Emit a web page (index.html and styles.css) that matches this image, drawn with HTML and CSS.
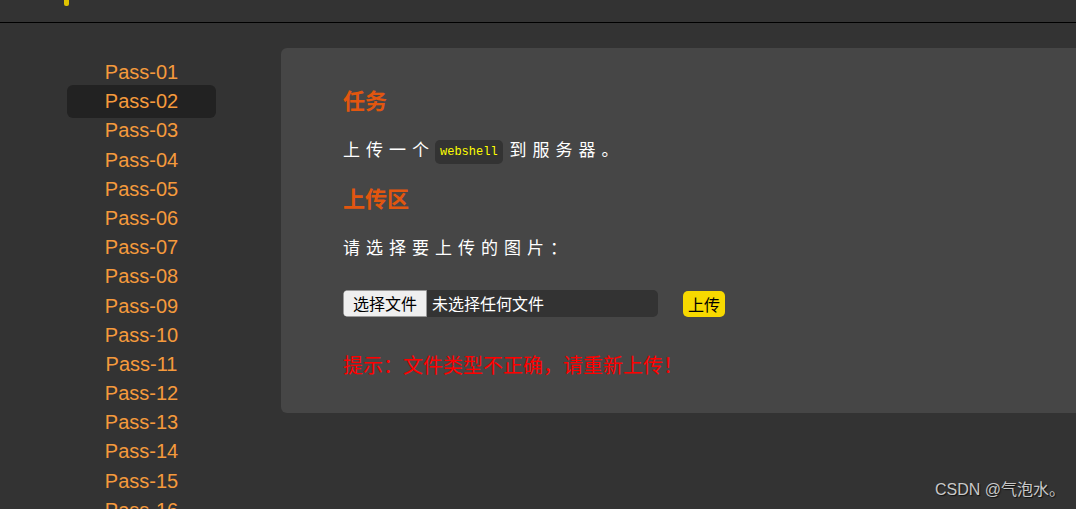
FILE: index.html
```html
<!DOCTYPE html>
<html lang="zh-CN">
<head>
  <meta charset="UTF-8" />
  <meta name="viewport" content="width=device-width, initial-scale=1.0" />
  <title>upload-labs</title>
  <link rel="stylesheet" href="styles.css">
</head>
<body>
  <header class="topbar">
    <span class="logo-tail"></span>
  </header>

  <div class="layout">
    <nav class="menu">
      <a href="#" class="menu-item">Pass-01</a>
      <a href="#" class="menu-item active">Pass-02</a>
      <a href="#" class="menu-item">Pass-03</a>
      <a href="#" class="menu-item">Pass-04</a>
      <a href="#" class="menu-item">Pass-05</a>
      <a href="#" class="menu-item">Pass-06</a>
      <a href="#" class="menu-item">Pass-07</a>
      <a href="#" class="menu-item">Pass-08</a>
      <a href="#" class="menu-item">Pass-09</a>
      <a href="#" class="menu-item">Pass-10</a>
      <a href="#" class="menu-item">Pass-11</a>
      <a href="#" class="menu-item">Pass-12</a>
      <a href="#" class="menu-item">Pass-13</a>
      <a href="#" class="menu-item">Pass-14</a>
      <a href="#" class="menu-item">Pass-15</a>
      <a href="#" class="menu-item">Pass-16</a>
    </nav>

    <main class="panel">
      <h2 class="title">任务</h2>
      <p class="text">上传一个<code class="code">webshell</code>到服务器。</p>

      <h2 class="title">上传区</h2>
      <p class="text">请选择要上传的图片：</p>

      <form class="upload-form">
        <div class="file-box">
          <span class="file-btn">选择文件</span>
          <span class="file-name">未选择任何文件</span>
        </div>
        <button type="submit" class="submit-btn">上传</button>
      </form>

      <p class="msg">提示：文件类型不正确，请重新上传！</p>
    </main>
  </div>

  <div class="watermark">CSDN @气泡水。</div>
</body>
</html>
```

FILE: styles.css
```css
body {
  margin: 0;
  height: 509px;
  overflow: hidden;
  background-color: #333;
  font-family: "Liberation Sans", Arial, "Noto Sans CJK SC", sans-serif;
  color: #fff;
}

.topbar {
  height: 22px;
  border-bottom: 1px solid #000;
  background-color: #333;
}

.logo-tail {
  display: block;
  margin-left: 64px;
  width: 5px;
  height: 6px;
  background-color: #e0c400;
  border-radius: 0 0 2px 2px;
}

.layout {
  display: flex;
  align-items: flex-start;
}

.menu {
  display: flex;
  flex-direction: column;
  width: 149px;
  margin-left: 67px;
  padding-top: 35px;
}

.menu-item {
  display: block;
  height: 29.2px;
  line-height: 29.2px;
  text-align: center;
  font-size: 20px;
  color: #f59a3c;
  text-decoration: none;
}

.menu-item.active {
  height: 33.2px;
  line-height: 33.2px;
  margin: -2px 0;
  background-color: #222;
  border-radius: 6px;
}

.panel {
  flex: 1;
  margin: 25px 0 0 65px;
  height: 365px;
  padding: 34px 0 0 62px;
  box-sizing: border-box;
  background-color: #464646;
  border-radius: 6px 0 0 6px;
  font-family: "Noto Sans CJK SC", sans-serif;
}

.title {
  margin: 0;
  height: 34px;
  line-height: 34px;
  font-size: 22px;
  font-weight: bold;
  color: #e2560f;
}

.text {
  margin: 16px 0 14px;
  height: 34px;
  line-height: 34px;
  font-size: 17px;
  letter-spacing: 6px;
  color: #fff;
}

.code {
  display: inline-block;
  margin: 0 7px 0 0;
  padding: 0 5px;
  height: 24px;
  line-height: 24px;
  vertical-align: 1px;
  background-color: #333;
  border-radius: 5px;
  font-family: "Liberation Mono", monospace;
  font-size: 12px;
  letter-spacing: 0;
  color: #ff0;
}

.upload-form {
  display: flex;
  align-items: center;
  gap: 25px;
  margin-top: 26px;
}

.file-box {
  display: flex;
  width: 315px;
  height: 27px;
  background-color: #333;
  border-radius: 5px;
  overflow: hidden;
  font-size: 16px;
}

.file-btn {
  padding: 0 9px;
  line-height: 25px;
  background-color: #efefef;
  border: 1px solid #999;
  border-radius: 3px 0 0 3px;
  color: #000;
}

.file-name {
  padding-left: 5px;
  line-height: 27px;
  color: #fff;
}

.submit-btn {
  height: 26px;
  padding: 0 5px;
  border: none;
  border-radius: 5px;
  background-color: #f7d900;
  font-family: "Noto Sans CJK SC", sans-serif;
  font-size: 16px;
  color: #000;
}

.msg {
  margin: 33px 0 0;
  font-size: 20px;
  color: #f00;
}

.watermark {
  position: absolute;
  right: 11px;
  bottom: 9px;
  font-family: "Liberation Sans", "Noto Sans CJK SC", sans-serif;
  font-size: 16px;
  color: #c8c8c8;
  text-shadow: 1px 1px 1px #111;
}
```
